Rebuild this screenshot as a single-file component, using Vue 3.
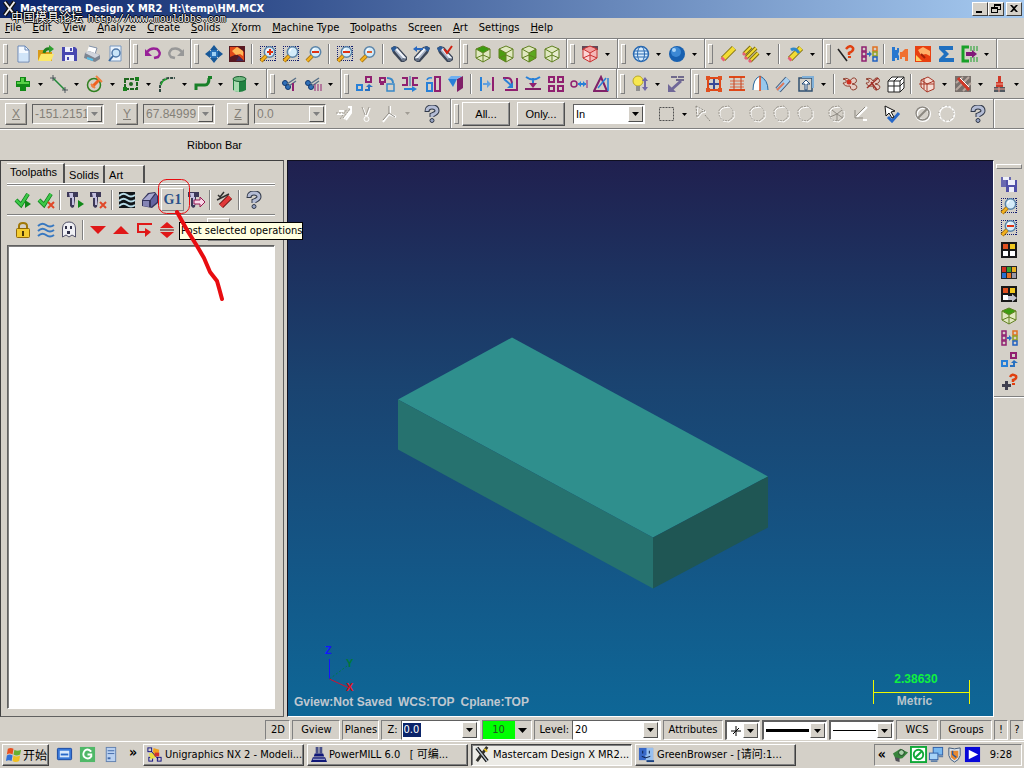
<template>
  <div class="app">
    <header class="titlebar">
      <svg class="title-icon" viewBox="0 0 18 18" v-html="icons.xlogo"></svg>
      <h1 class="title">Mastercam Design X MR2&nbsp; H:\temp\HM.MCX</h1>
      <div class="window-buttons">
        <button class="win-btn" aria-label="Minimize">
          <svg viewBox="0 0 12 10"><path d="M2 7h6v2H2z" /></svg>
        </button>
        <button class="win-btn" aria-label="Restore">
          <svg viewBox="0 0 12 10"><path d="M4 0h7v6H8v3H1V3h3zM5 2v1h3v2h2V2zM2 5v3h5V5z" fill-rule="evenodd" /></svg>
        </button>
        <button class="win-btn close" aria-label="Close">
          <svg viewBox="0 0 12 10"><path d="M2 1h2l2 2 2-2h2L7 4.500l3 3.500H8L6 6 4 8H2l3-3.500z" /></svg>
        </button>
      </div>
      <div class="watermark">中国模具论坛 <span>http://www.mouldbbs.com</span></div>
    </header>

    <nav class="menubar">
      <button v-for="m in menus" :key="m.join('')" class="menu-item">{{ m[0] }}<u>{{ m[1] }}</u>{{ m[2] }}</button>
    </nav>

    <div v-for="(row, r) in toolbars" :key="r" class="toolbar-row">
      <div v-for="(group, g) in row" :key="g" class="tool-group">
        <template v-for="(item, i) in group" :key="i">
          <span v-if="item === '|'" class="sep"></span>
          <button v-else-if="item === 'v'" class="drop" aria-label="More options"><svg viewBox="0 0 5 3"><path d="M0 0h5L2.500 3z" /></svg></button>
          <button v-else class="tool" :aria-label="item"><svg viewBox="0 0 18 18" v-html="icons[item]"></svg></button>
        </template>
      </div>
    </div>

    <div class="toolbar-row coord-row">
      <div class="tool-group coords">
        <div v-for="c in coords" :key="c.axis" class="coord">
          <button class="axis-btn" disabled><u>{{ c.axis }}</u></button>
          <div class="combo disabled">
            <input v-model="c.value" :aria-label="c.axis + ' coordinate'" disabled />
            <button class="combo-btn" disabled :aria-label="c.axis + ' history'"><svg viewBox="0 0 7 4"><path d="M0 0h7L3.500 4z" /></svg></button>
          </div>
        </div>
        <button v-for="n in ['dPoints', 'dExclaim', 'dPen']" :key="n" class="tool" disabled :aria-label="n"><svg viewBox="0 0 18 18" v-html="icons[n]"></svg></button>
        <button class="drop faded" disabled aria-label="More options"><svg viewBox="0 0 5 3"><path d="M0 0h5L2.500 3z" /></svg></button>
        <button class="tool help" aria-label="Help"><svg viewBox="0 0 18 18" v-html="icons.help"></svg></button>
      </div>
      <div class="tool-group selection">
        <button class="push-btn">All...</button>
        <button class="push-btn">Only...</button>
        <div class="combo in-combo">
          <select aria-label="Selection mode"><option>In</option><option>Out</option></select>
          <span class="combo-btn"><svg viewBox="0 0 7 4"><path d="M0 0h7L3.500 4z" /></svg></span>
        </div>
        <template v-for="(item, i) in selectTools" :key="i">
          <span v-if="item === '_'" class="space"></span>
          <button v-else-if="item === 'v'" class="drop" aria-label="More options"><svg viewBox="0 0 5 3"><path d="M0 0h5L2.500 3z" /></svg></button>
          <button v-else class="tool" :aria-label="item"><svg viewBox="0 0 18 18" v-html="icons[item]"></svg></button>
        </template>
      </div>
    </div>

    <div class="ribbon">Ribbon Bar</div>

    <main class="workspace">
      <aside class="manager">
        <div class="tabs" role="tablist">
          <button v-for="t in tabs" :key="t" class="tab" role="tab" :class="{ active: t === activeTab }" :aria-selected="t === activeTab" @click="activeTab = t">{{ t }}</button>
        </div>
        <div v-for="(row, r) in managerTools" :key="r" class="manager-tools">
          <template v-for="(item, i) in row" :key="i">
            <span v-if="item === '|'" class="sep narrow"></span>
            <button v-else class="tool" :class="{ raised: item === 'g1' || item === 'ghostDim' }" :aria-label="item">
              <span v-if="item === 'g1'" class="g1">G1</span>
              <svg v-else viewBox="0 0 18 18" v-html="icons[item]"></svg>
            </button>
          </template>
        </div>
        <div class="tree"></div>
        <div class="tooltip" role="tooltip">Post selected operations</div>
        <svg class="annotation" viewBox="0 0 80 130">
          <rect x="5.500" y="5.500" width="31" height="34" rx="8" stroke-width="1" />
          <path d="M24 38L34 56L44 72L51 84L57 98L64 107L66 114L69 125" stroke-width="4" />
        </svg>
      </aside>

      <section class="viewport">
        <svg class="model" viewBox="0 0 705 554">
          <polygon points="224,176 480,315 365,376 110,238" fill="#2f8f8d" />
          <polygon points="110,238 365,376 365,427 110,288" fill="#26726f" />
          <polygon points="365,376 480,315 480,366 365,427" fill="#1f5654" />
        </svg>
        <svg class="gnomon" viewBox="0 0 40 52">
          <path d="M9.500 16v20" stroke="#1414ff" />
          <path d="M9.500 36L29 45" stroke="#d01030" />
          <path d="M9.500 36L27 23" stroke="#007848" stroke-dasharray="2 2" />
          <text x="5" y="11" fill="#1414ff">Z</text>
          <text x="26" y="24" fill="#007838">Y</text>
          <text x="26" y="48" fill="#e01020">X</text>
        </svg>
        <div class="view-labels">
          <span>Gview:Not Saved</span><span>WCS:TOP</span><span>Cplane:TOP</span>
        </div>
        <div class="scale">
          <span class="scale-value">2.38630</span>
          <span class="scale-line"></span>
          <span class="scale-unit">Metric</span>
        </div>
      </section>

      <div class="side-tools">
        <button v-for="n in sideTools" :key="n" class="tool" :aria-label="n"><svg viewBox="0 0 18 18" v-html="icons[n]"></svg></button>
      </div>
    </main>

    <div class="statusbar">
      <button class="cell dim">2D</button>
      <button class="cell gview">Gview</button>
      <button class="cell planes">Planes</button>
      <div class="cell field">
        <label for="zdepth">Z:</label>
        <div class="combo zcombo">
          <input id="zdepth" v-model="zDepth" class="selected" />
          <span class="combo-fill"></span>
          <button class="combo-btn" aria-label="Z history"><svg viewBox="0 0 7 4"><path d="M0 0h7L3.500 4z" /></svg></button>
        </div>
      </div>
      <div class="cell color-cell">
        <button class="color">10</button>
        <button class="color-drop" aria-label="Color list"><svg viewBox="0 0 9 5"><path d="M0 0h9L4.500 5z" /></svg></button>
      </div>
      <div class="cell field">
        <label for="level">Level:</label>
        <div class="combo level-combo">
          <input id="level" v-model="level" />
          <button class="combo-btn" aria-label="Level list"><svg viewBox="0 0 7 4"><path d="M0 0h7L3.500 4z" /></svg></button>
        </div>
      </div>
      <button class="cell attributes">Attributes</button>
      <div v-for="s in styles" :key="s.name" class="combo style-combo" :class="s.name">
        <button class="style-value" :aria-label="s.label"><svg v-if="s.name === 'point'" viewBox="0 0 10 10"><path d="M5 0v10M0 5h10M2 8l6-6" /></svg><span v-else class="stroke"></span></button>
        <span class="combo-btn"><svg viewBox="0 0 7 4"><path d="M0 0h7L3.500 4z" /></svg></span>
      </div>
      <button class="cell wcs">WCS</button>
      <button class="cell groups">Groups</button>
      <button class="cell tiny">!</button>
      <button class="cell tiny">?</button>
    </div>

    <footer class="taskbar">
      <button class="start"><svg viewBox="0 0 18 18" v-html="icons.windows"></svg>开始</button>
      <div class="quick">
        <button v-for="n in ['desktop', 'greenG', 'server']" :key="n" :aria-label="n"><svg viewBox="0 0 18 18" v-html="icons[n]"></svg></button>
        <span class="chevrons">»</span>
      </div>
      <button v-for="t in tasks" :key="t.icon" class="task" :class="{ active: t.active }">
        <svg viewBox="0 0 18 18" v-html="icons[t.icon]"></svg><span>{{ t.text }}</span>
      </button>
      <div class="tray">
        <span class="chevrons">«</span>
        <svg v-for="n in ['trayCard', 'trayGreen', 'trayNet', 'trayShield', 'trayPlay']" :key="n" viewBox="0 0 18 18" v-html="icons[n]"></svg>
        <time>9:28</time>
      </div>
    </footer>
  </div>
</template>

<script setup>
import { ref, reactive } from 'vue';

const menus = [
  ['', 'F', 'ile'], ['', 'E', 'dit'], ['', 'V', 'iew'], ['', 'A', 'nalyze'], ['', 'C', 'reate'],
  ['', 'S', 'olids'], ['', 'X', 'form'], ['', 'M', 'achine Type'], ['', 'T', 'oolpaths'],
  ['Sc', 'r', 'een'], ['', 'A', 'rt'], ['Sett', 'i', 'ngs'], ['', 'H', 'elp']
];

const toolbars = [
  [
    ['newFile', 'open', 'save', 'print', 'preview'],
    ['undo', 'redo'],
    ['pan', 'repaint', '|', 'zoomWin', 'zoomTarget', 'zoomOut', '|', 'unzoomWin', 'unzoom', '|', 'tube', 'tubeArrow', 'tubeCheck'],
    ['cubeTop', 'cubeFront', 'cubeSide', 'cubeIso'],
    ['cubeRed', 'v'],
    ['globeWire', 'v', 'globe', 'v'],
    ['eraser', 'eraserMulti', 'v', '|', 'undelete', 'v'],
    ['lineQuery', 'attrs', '|', 'machine', 'flame', 'sigma', 'run', 'v']
  ],
  [
    ['plus', 'v', 'line', 'v', 'circle', 'v', 'rectangle', 'v', 'fillet', 'v', 'spline', 'v', 'cylinder', 'v'],
    ['trim', 'trimMany', 'v'],
    ['translate', 'rotate', 'mirror', 'scale', 'offset', '|', 'stretch', 'roll', 'project', 'array', 'dynamic', 'drag'],
    ['bulb', 'v', 'dimension'],
    ['netSurf', 'ruled', 'revolve', 'sweep', 'extrude', 'v', '|', 'flower', 'flowerTrim', 'box', '|', 'surfFillet', 'v', 'surfTrim', 'v', 'lathe', 'v']
  ]
];

const selectTools = [
  'marquee', 'v', 'dCursor', 'dHex', '_', 'dHex', 'dHex', 'dHex', '_', 'dCube', 'dArrow', '_',
  'pointer', '_', 'dCancel', 'dCircle', '_', 'help'
];

const coords = reactive([
  { axis: 'X', value: '-151.2151' },
  { axis: 'Y', value: '67.84999' },
  { axis: 'Z', value: '0.0' }
]);

const tabs = ['Toolpaths', 'Solids', 'Art'];
const activeTab = ref('Toolpaths');

const managerTools = [
  ['checkAll', 'checkNone', '|', 'regen', 'regenX', '|', 'wavesDark', 'solidBox', 'g1', 'feed', '|', 'knife', '|', 'help'],
  ['lock', 'waves', 'ghost', '|', 'down', 'up', 'insert', 'expand', '|', 'expandDim', 'ghostDim']
];

const sideTools = ['saveSome', 'zoomTarget', 'zoomOutWin', 'levels', 'palette', 'levelsMove', 'cubeTop', 'attrs', 'translate', 'plusQuery'];

const zDepth = ref('0.0');
const level = ref('20');

const styles = [
  { name: 'point', label: 'Point style' },
  { name: 'thick', label: 'Line width' },
  { name: 'thin', label: 'Line style' }
];

const tasks = [
  { icon: 'nx', text: 'Unigraphics NX 2 - Modeli...' },
  { icon: 'mill', text: 'PowerMILL 6.0   [ 可编...' },
  { icon: 'xdark', text: 'Mastercam Design X MR2...', active: true },
  { icon: 'browser', text: 'GreenBrowser - [请问:1...' }
];

// Small builders for glyphs that share a base shape
const stroke = (d, color, width = 2) => `<path d="${d}" fill="none" stroke="${color}" stroke-width="${width}"/>`;
const fill = (d, color) => `<path d="${d}" fill="${color}"/>`;
const box = (x, y, w, h, color, width = 2) => `<rect x="${x}" y="${y}" width="${w}" height="${h}" fill="none" stroke="${color}" stroke-width="${width}"/>`;

const lens = '<circle cx="10.500" cy="7" r="5.200" fill="#d4ecfa" stroke="#5b84a8" stroke-width="1.500"/>' + fill('M7 6q1-3 4-3-2 1-3 4z', '#fff') + stroke('M7 11L2 16', '#9a6a10', 4) + stroke('M7 11L2 16', '#f0b020', 2.5);
const dots = '<path d="M1 1.500h16M1 15.500h16M1.500 1v15M16.500 1v15" fill="none" stroke="#101c70" stroke-dasharray="1 1"/>';
const minus = fill('M7 6h7v2H7z', '#e03010');

const cube = (line, top, left, right) =>
  fill('M9 1L16 4L9 8L2 4z', top) + fill('M2 4L9 8V17L2 13z', left) + fill('M9 8L16 4V13L9 17z', right) +
  stroke('M9 1L16 4V13L9 17L2 13V4zM2 4L9 8L16 4M9 8V17M2 13L9 10L16 13', line, 1);

const metalTube = fill('M1 3l3-2 4 1 9 10v3l-3 2h-3L3 8z', '#3c4658') + fill('M3 4l3-2 10 11-3 3z', '#a4b0c4') + fill('M5 4l2-1 9 10-2 1z', '#f0f4fa') + fill('M1 3l4-2 2 2-4 4z', '#2c5c98') + '<ellipse cx="13.500" cy="14.500" rx="2" ry="1.500" fill="#687488"/>';
const yellowEraser = stroke('M4 14L15 3', '#80700c', 6) + stroke('M4 14L15 3', '#f2dc34', 4) + stroke('M3 15L5 13', '#e86078', 4);
const scissors = '<circle cx="4" cy="8" r="2.500" fill="#3070b8" stroke="#103870"/><circle cx="7" cy="12" r="2.500" fill="#3070b8" stroke="#103870"/>' + stroke('M6 9L15 3M8 11L15 6', '#587088', 1.5);
const check = stroke('M2 9L7 14L14 3', '#0a7a18', 4) + stroke('M2 9L7 14L14 3', '#3cc848', 2.5);
const redX = stroke('M11 11L17 17M17 11L11 17', '#e04828', 2);
const endMill = fill('M1 1h11v5H9v3l-1 7-2 1-2-2V6H1z', '#3c3858') + fill('M3 2h4v4h1v8H6V7H4z', '#c4c0e0');
const etchedHex = '<path d="M5 3L12 2L16 6V13L11 17L5 16L2 11V6z" fill="none" stroke="#fff" stroke-width="1"/><path d="M4 2L11 1L15 5V12L10 16L4 15L1 10V5z" fill="none" stroke="#9c9890" stroke-width="1" stroke-dasharray="2 1"/>';
const waveLines = (c) => stroke('M1 5Q5 1 9 4T17 4M1 10Q5 6 9 9T17 9M1 15Q5 11 9 14T17 14', c, 2);
const palette = (d) => d.map(([x, y, c]) => `<rect x="${x}" y="${y}" width="4" height="5" fill="${c}"/>`).join('');
const flowerShape = '<path d="M2 4Q7 2 9 6Q12 1 15 4Q17 8 11 9Q18 10 15 14Q10 17 9 11Q4 12 2 8Q6 8 5 5z" fill="#e4ccc4" stroke="#904030"/>';

const icons = {
  xlogo: stroke('M3 1L15 17M14 1L3 16', '#111', 5) + stroke('M3 1L15 17M14 1L3 16', '#eee', 2),
  xdark: stroke('M3 2L14 16', '#111', 4) + stroke('M14 1L3 16', '#30302c', 3) + stroke('M3 2L14 16', '#b8c4d0', 1.5) + stroke('M11 3l3 3', '#e8c020', 2),
  newFile: '<path d="M4 1h7l4 4v12H4z" fill="#f4f9ff" stroke="#6888b8"/>' + fill('M5 8h9v8H5z', '#d0e4f8') + stroke('M11 1v4h4', '#6888b8', 1),
  open: fill('M1 5h6l2 2h6v9H1z', '#d89a18') + fill('M4 9h13l-3 7H1z', '#fce868') + stroke('M7 8Q8 3 13 4', '#208020', 3) + fill('M12 0l5 4-5 4z', '#30a030'),
  save: fill('M2 2h13l2 2v12H2z', '#4848b0') + fill('M5 2h8v5H5zM5 10h9v6H5z', '#eef0fa') + fill('M10 3h2v3h-2zM7 12h2v3H7z', '#4848b0'),
  print: fill('M6 1l8 2-2 6-8-2z', '#fff') + stroke('M6 1l8 2-2 6', '#8090a8', 1) + fill('M2 8l4-2 11 4v4l-5 3L1 13z', '#7c8490') + fill('M2 8l4-2 11 4-5 3z', '#d0d4dc') + stroke('M4 13l6 2', '#58c0e8', 2),
  preview: '<path d="M4 1h11v15H4z" fill="#eaf3fc" stroke="#7898c0"/><circle cx="10" cy="8" r="4" fill="#c8e4f8" stroke="#5078a8" stroke-width="1.500"/>' + stroke('M7 11L3 16', '#3868a0', 2),
  undo: stroke('M3 7Q7 2 13 4Q18 8 14 12L10 13', '#982098', 2.5) + fill('M1 4v7h7z', '#982098'),
  redo: stroke('M15 7Q11 2 5 4Q0 8 4 12L8 13', '#989898', 2.5) + fill('M17 4v7h-7z', '#989898'),
  pan: fill('M9 0l4 5H5zM9 18l4-5H5zM0 9l5-4v8zM18 9l-5-4v8z', '#185898') + fill('M6 5h6v1h1v6h-1v1H6v-1H5V6h1z', '#2870b8') + fill('M7 7h4v4H7z', '#a0d0f4'),
  repaint: fill('M1 1h16v16H1z', '#581820') + fill('M2 2h8l6 5v9L9 9 2 12z', '#e04818') + fill('M4 6l5-4 6 4v5l-3-2-4 1z', '#ffb858') + fill('M11 11l5 5H8z', '#402858'),
  zoomWin: dots + lens + fill('M10 4h2v2h2v2h-2v2h-2V8H8V6h2z', '#e03010'),
  zoomTarget: dots + lens,
  zoomOut: lens + minus,
  unzoomWin: dots + lens + minus,
  zoomOutWin: dots + lens + minus,
  unzoom: lens + fill('M8 6h5v2H8z', '#e06030'),
  tube: metalTube,
  tubeArrow: '<g transform="matrix(-1 0 0 1 18 0)">' + metalTube + '</g>' + stroke('M2 4h8', '#2868c0', 2) + fill('M0 4l4-3v6z', '#2868c0'),
  tubeCheck: metalTube + stroke('M8 4l3 4 5-7', '#d02010', 2),
  cubeTop: cube('#608020', '#3c9c10', '#e0e8c0', '#e0e8c0'),
  cubeFront: cube('#608020', '#e0e8c0', '#4c9c10', '#e0e8c0'),
  cubeSide: cube('#608020', '#e0e8c0', '#e0e8c0', '#5ca820'),
  cubeIso: cube('#608020', '#e0e8c0', '#e0e8c0', '#e8ecd0'),
  cubeRed: fill('M1 1h16v4H1z', '#604858') + cube('#c83030', '#f4a0a0', '#fcd4d4', '#f4b8b8'),
  globeWire: '<circle cx="9" cy="9" r="7.500" fill="#d8ecfc" stroke="#2868b0" stroke-width="1.500"/><ellipse cx="9" cy="9" rx="3.500" ry="7.500" fill="none" stroke="#2868b0"/>' + stroke('M2 6h14M1 9h16M2 12h14', '#2868b0', 1),
  globe: '<circle cx="9" cy="9" r="8" fill="#1860b0"/><circle cx="8" cy="7" r="5" fill="#3c88d4"/><circle cx="6" cy="5" r="2" fill="#a8d4f8"/>',
  eraser: yellowEraser,
  eraserMulti: stroke('M2 9L9 2', '#80700c', 4) + stroke('M2 9L9 2', '#f2dc34', 2) + stroke('M8 16L16 8', '#80700c', 4) + stroke('M8 16L16 8', '#f2dc34', 2) + stroke('M4 13L14 3', '#80700c', 4) + stroke('M4 13L14 3', '#f2dc34', 2) + stroke('M1 10l2-2M3 14l2-2M7 17l2-2', '#e86078', 3),
  undelete: yellowEraser + stroke('M5 5q4-3 8 3', '#3088c8', 3),
  lineQuery: stroke('M1 4L10 16', '#202020', 1.5) + stroke('M9 4Q13 -1 16 3Q17 6 12 8V10', '#e04010', 2.5) + fill('M11 11h3v2h-3z', '#e04010'),
  attrs: box(2, 2, 4, 4, '#902070', 1.5) + box(2, 7, 4, 4, '#902070', 1.5) + box(2, 12, 4, 4, '#902070', 1.5) + box(13, 2, 4, 4, '#e07020', 1.5) + box(13, 7, 4, 4, '#90a020', 1.5) + box(13, 12, 4, 4, '#2060c0', 1.5) + fill('M7 8h2V6l3 3-3 3v-2H7z', '#3070c0'),
  machine: fill('M1 2h3v3h2V3h2v4l-1 2 1 2v4H6v-2H4v3H1z', '#2878d0') + fill('M9 7h2l3-3h3v12h-3v-4h-3v2H9z', '#f07030'),
  flame: fill('M1 1h16v16H1z', '#e84010') + fill('M4 5l5-3 7 4v5l-4-2-5 1z', '#ffb068') + fill('M2 10l6 6H2z', '#ffd060') + stroke('M7 9l4 4', '#a02008', 2),
  sigma: fill('M2 1h14v4H8l4 4-4 4h9v4H2v-3l5-5-5-5z', '#2070c0'),
  run: stroke('M9 2H3V16H9', '#18a028', 3) + stroke('M11 1v5M14 1v5M17 1v5M11 12v5M14 12v5M17 12v5', '#18a028', 1) + fill('M6 7h6V5l5 4-5 4v-2H6z', '#801878'),
  plus: fill('M6 2h6v4h4v6h-4v4H6v-4H2V6h4z', '#128a18') + fill('M7 3h3v4h5v2H3V7h4z', '#58d048'),
  line: stroke('M3 3L15 15', '#208838', 1.5) + stroke('M3 0v6M0 3h6M15 12v6M12 15h6', '#505860', 1),
  circle: '<circle cx="8" cy="10" r="6.500" fill="none" stroke="#308020" stroke-width="1.500"/>' + stroke('M6 12L14 4', '#f06020', 3) + stroke('M10 1l6 6M5 9l4 4', '#f08040', 2),
  rectangle: '<rect x="3" y="4" width="12" height="10" fill="none" stroke="#206820" stroke-width="2" stroke-dasharray="4 1"/><circle cx="9" cy="9" r="2" fill="#206820"/>' + fill('M1 12h4v4H1zM13 2h4v4h-4z', '#18801c'),
  fillet: '<path d="M2 17V11Q3 4 11 3H17" fill="none" stroke="#304840" stroke-width="2" stroke-dasharray="3 1"/>' + stroke('M3 10Q4 5 9 4', '#20a030', 1.5),
  spline: stroke('M2 15V10H11Q15 10 15 3', '#188028', 3) + fill('M14 1h4v3h-4z', '#188028'),
  cylinder: fill('M3 4v11q6 4 13 0V4z', '#208040') + fill('M4 5v11q3 1 5 1V5z', '#a8dcb0') + '<ellipse cx="9.500" cy="4" rx="6.500" ry="2.500" fill="#70b880" stroke="#186030"/>',
  trim: scissors + stroke('M12 8v8', '#902070', 2),
  trimMany: scissors + stroke('M11 9v7M14 9v7M17 9v7', '#902070', 1),
  translate: box(2, 10, 5, 5, '#2880d8') + box(11, 2, 5, 5, '#902070') + stroke('M10 15h4v-3', '#2870c0', 2) + fill('M11 12l3-3 4 3z', '#2870c0'),
  rotate: stroke('M2 3h5v4H2zM2 9h4', '#902070', 2) + box(9, 9, 7, 7, '#3888c8', 1.5) + stroke('M9 3Q15 3 15 8', '#3888c8', 2),
  mirror: stroke('M1 3h5v7H1M17 3h-5v7h5', '#902070', 2) + stroke('M9 1v10', '#2868a8', 1) + stroke('M3 14h9', '#2880d8', 2) + fill('M11 11l5 3-5 3z', '#2880d8'),
  scale: box(3, 8, 5, 8, '#2880d8') + box(11, 2, 5, 14, '#902070') + stroke('M3 5q1-3 5-2', '#2880d8', 1.5),
  offset: fill('M1 4h9l-4 8z', '#2880d8') + fill('M10 4l6-3v12l-6 4z', '#802068') + fill('M4 1h11l-5 3H1z', '#70b0f0'),
  stretch: stroke('M3 2v14', '#2880d8') + stroke('M15 2v14', '#902070') + fill('M5 8h4V5l4 4-4 4v-3H5z', '#60a0e0'),
  roll: stroke('M2 3h5q4 0 4 7M4 15h12V3', '#902070', 2) + stroke('M3 4l8 7', '#2880d8', 2) + fill('M12 7v6H6z', '#2880d8'),
  project: stroke('M1 14h16', '#802068', 2) + stroke('M2 2q7 5 14 0M9 3v7', '#2880d8', 2) + fill('M5 8h8l-4 5z', '#902070'),
  array: box(2, 2, 5, 5, '#902070') + box(11, 2, 5, 5, '#902070') + box(2, 11, 5, 5, '#902070') + box(11, 11, 5, 5, '#902070'),
  dynamic: '<circle cx="4" cy="9" r="3" fill="none" stroke="#902070" stroke-width="1.500"/>' + stroke('M8 9h8', '#2880d8', 2) + fill('M11 6v6L8 9zM13 6v6l3-3z', '#2880d8') + stroke('M17 5v8', '#902070', 1),
  drag: stroke('M1 16L8 2L14 16z', '#802068', 2) + stroke('M5 13L13 3M15 3v13', '#2880d8', 1.5),
  bulb: '<circle cx="7" cy="6" r="5" fill="#f8e850" stroke="#b8a828"/>' + fill('M5 11h4v5H5z', '#909090') + fill('M14 2l3 4h-2v6h2l-3 4-3-4h2V6h-2z', '#7068a8'),
  dimension: stroke('M4 2h6M11 2h6M9 5h8', '#504878', 1.5) + stroke('M14 6L4 15', '#706898', 3) + fill('M1 9v8h8z', '#706898'),
  netSurf: box(3, 3, 12, 12, '#e04818', 2) + stroke('M9 4v10M4 9h10', '#384898', 2) + fill('M1 1h4v4H1zM13 1h4v4h-4zM1 13h4v4H1zM13 13h4v4h-4z', '#e05020'),
  ruled: stroke('M1 2h16M1 15h16', '#e04818', 2) + stroke('M2 6h14M2 9h14M2 12h14', '#e06840', 1) + stroke('M6 2v13M13 2v13', '#c04020', 1),
  revolve: fill('M2 15Q2 4 9 1V15z', '#fff') + fill('M9 1Q17 5 17 15H9z', '#98c8ec') + stroke('M9 1Q17 5 17 15M2 15Q2 4 9 1', '#2868a0', 1) + stroke('M9 1v15', '#e04818', 1.5),
  sweep: stroke('M4 15L14 4', '#405878', 7) + stroke('M4 15L14 4', '#a8d0f0', 5) + stroke('M3 15l7-7', '#e07858', 2),
  extrude: box(2, 3, 13, 13, '#305070', 1.5) + fill('M5 1h12v12h-2V3H5z', '#80b0d8') + fill('M8 15V9H5l4-4 4 4h-3v6z', '#fff') + stroke('M8 15V9H5l4-4 4 4h-3v6z', '#204878', 1),
  flower: flowerShape + '<circle cx="8" cy="7" r="2.500" fill="#d03020"/>',
  flowerTrim: flowerShape + stroke('M3 13L14 3M7 7l6 8', '#a03028', 1.5),
  box: fill('M5 2h12v11l-4 4H1V6z', '#fff') + stroke('M1 6h12v11H1zM1 6l4-4h12l-4 4M17 2v11l-4 4M7 6v11M1 11h12l4-4M7 6l4-4', '#202020', 1),
  surfFillet: fill('M3 5l7-3 6 4v8l-7 3-6-5z', '#f4dcd4') + stroke('M3 5l7-3 6 4v8l-7 3-6-5zM3 5l6 4 7-3M9 9v8M1 9h15M6 3v11', '#a83828', 1),
  surfTrim: fill('M1 1h16v16H1z', '#78706c') + stroke('M2 15L15 2M2 8l7-6M9 16l8-8', '#b8a8a0', 2) + stroke('M4 3l11 12', '#d03828', 3) + stroke('M6 3l9 9', '#fff', 1),
  lathe: fill('M8 1h3v6H8zM6 7h7v5H6z', '#d03828') + fill('M4 12h11v5H4z', '#505860') + stroke('M6 9h7M4 14h11M9 12v5', '#f0a090', 1),
  help: stroke('M4 7Q4 2 9 2Q14 2 14 6Q14 8 9 10V12', '#303848', 5) + stroke('M4 6Q4 2 9 2Q14 2 14 6Q14 8 9 10V12', '#b4bcd4', 3) + '<circle cx="9" cy="15.500" r="2" fill="#98a4c4" stroke="#303848"/>',
  dPoints: '<path d="M2 9h7M4 6h5M9 14L16 5M13 2h3v6l-5 7" fill="none" stroke="#fff" stroke-width="2"/><path d="M1 8h7M8 13L15 4M5 14L12 4" fill="none" stroke="#a09c94" stroke-dasharray="2 1"/>',
  dExclaim: stroke('M5 3l3 8M12 3L9 11', '#fff', 1.5) + stroke('M4 2l3 8M11 2L8 10', '#a09c94', 1) + '<circle cx="8.500" cy="14" r="2.500" fill="none" stroke="#fff"/>',
  dPen: stroke('M9 1v7L2 17M8 9l7 3', '#fff', 2) + stroke('M8 1v7L2 15M8 8l6 4', '#8c8880', 1),
  marquee: '<rect x="2.500" y="2.500" width="14" height="13" fill="none" stroke="#505050" stroke-dasharray="2 1"/>',
  dCursor: '<path d="M3 2L12 7L8 8L4 13z" fill="none" stroke="#fff"/><path d="M2 1L11 6L7 7L3 12zM11 10l5 6" fill="none" stroke="#8c8880" stroke-dasharray="2 1"/>',
  dHex: etchedHex,
  dCube: etchedHex + stroke('M4 5l5 4 5-4M9 9v7M2 12l7-3 6 4', '#908c84', 1),
  dArrow: stroke('M15 2L5 12M15 15h-4', '#fff', 2) + stroke('M13 2L4 11M3 5v8h8', '#8c8880', 1),
  dCancel: '<circle cx="9" cy="9" r="6.500" fill="none" stroke="#fff" stroke-width="3"/><circle cx="8.500" cy="8.500" r="6.500" fill="none" stroke="#8c8880" stroke-width="1.500"/>' + stroke('M4 13L13 4', '#8c8880', 2),
  dCircle: '<circle cx="9" cy="9" r="7.500" fill="none" stroke="#fff" stroke-width="1.500"/><circle cx="8.500" cy="8.500" r="7.500" fill="none" stroke="#908c84" stroke-dasharray="1 3"/>',
  pointer: stroke('M5 12l4 4 7-8', '#2868c8', 3) + '<path d="M2 1L12 6L8 7L11 12L9 13L6 8L3 11z" fill="#fff" stroke="#111"/>',
  checkAll: check + fill('M11 9l6 4-6 4z', '#108818'),
  checkNone: check + redX,
  regen: endMill + fill('M12 9l6 4-6 4z', '#108818'),
  regenX: endMill + redX,
  wavesDark: fill('M1 1h16v16H1z', '#101418') + waveLines('#b8dce8'),
  waves: waveLines('#3878c0'),
  solidBox: fill('M1 9l6-7 7-1 3 4v7l-6 5-10-2z', '#34345c') + fill('M2 9l6-6 6-1-5 7z', '#a8a8d0') + fill('M2 10h6v6l-6-1z', '#8484b4') + fill('M10 9l5-6 1 2v6l-6 5z', '#6464a0'),
  feed: endMill + '<path d="M7 9h6V6l5 5-5 5v-3H7z" fill="#f8d8e8" stroke="#981850"/>',
  knife: stroke('M5 15L14 6', '#601010', 6) + stroke('M5 15L14 6', '#e03838', 4) + stroke('M2 4l3 3M8 1l-4 5M1 9l12-6', '#303030', 1.5),
  lock: '<path d="M5 8V5Q5 2 9 2Q13 2 13 5V8" fill="none" stroke="#a07808" stroke-width="2"/><rect x="2.500" y="7.500" width="13" height="9" rx="1" fill="#f4cc30" stroke="#906808"/>' + fill('M8 10h2v5H8z', '#483808'),
  ghost: '<path d="M2.500 16V7Q3 1 9 1Q15 1 15.500 7V16L12 14L9 16L6 14z" fill="#f0f0f4" stroke="#505068"/>' + fill('M5 5h2v3H5zM10 5h2v3h-2zM7 10h3v3H7z', '#303048'),
  ghostDim: fill('M4 3h8v2H4z', '#b0aca4'),
  expandDim: '',
  down: fill('M1 5h16l-8 8z', '#e01818'),
  up: fill('M1 13h16L9 5z', '#e01818'),
  insert: stroke('M17 3H3V11H11', '#e01818', 2) + fill('M10 7l6 4-6 5z', '#e01818'),
  expand: fill('M2 7h14L9 1zM2 11h14l-7 6z', '#e01818') + stroke('M2 9h14', '#501010', 1),
  saveSome: fill('M1 2h10v10H1z', '#6868b0') + fill('M6 5h11v12H6z', '#5050a8') + fill('M8 5h7v5H8zM3 2h6v3H3zM9 12h5v5H9z', '#eef0fa'),
  levels: fill('M1 1h16v16H1z', '#181818') + fill('M3 3h5v5H3z', '#e05020') + fill('M10 3h5v5h-5z', '#f0c820') + fill('M3 10h5v5H3zM10 10h5v5h-5z', '#fff'),
  levelsMove: fill('M1 1h16v16H1z', '#181818') + fill('M3 3h5v5H3z', '#e05020') + fill('M10 3h5v5h-5z', '#f0c820') + fill('M3 10h5v5H3z', '#fff') + fill('M8 11h4V9l5 4-5 4v-2H8z', '#c0c0cc'),
  palette: fill('M1 3h16v13H1z', '#282828') + palette([[2, 4, '#d03020'], [7, 4, '#38a030'], [12, 4, '#e8b020'], [2, 10, '#2870d0'], [7, 10, '#e87020'], [12, 10, '#9898a8']]),
  plusQuery: fill('M5 8h3v3h3v3H8v3H5v-3H2v-3h3z', '#404050') + stroke('M10 4Q12 0 16 3Q17 6 13 7V9', '#e04010', 2.5) + fill('M12 10h3v2h-3z', '#e04010'),
  windows: fill('M3 3q3-2 6 0L8 9Q5 7 2 9z', '#e85020') + fill('M10 4q3 2 7 0l-1 5q-4 2-7 0z', '#68b030') + fill('M2 10q3-2 6 0l-1 6q-3-2-6 0z', '#3070d8') + fill('M9 10q3 2 7 0l-1 6q-4 2-7 0z', '#f0c020'),
  desktop: '<rect x="1.500" y="2.500" width="15" height="12" rx="1" fill="#3878d8" stroke="#1848a0"/>' + fill('M4 5h10v7H4z', '#d8e8fc') + fill('M5 8h8v2H5z', '#2868c8'),
  greenG: '<rect x="1" y="1" width="16" height="16" fill="#50b868"/><path d="M13 6Q9 2 6 5Q3 9 6 12Q10 15 13 11V9H9" fill="none" stroke="#fff" stroke-width="2"/>',
  server: '<rect x="4.500" y="1.500" width="10" height="15" fill="#b8d0f0" stroke="#6080b0"/>' + stroke('M6 5h7M6 8h7', '#4068a8', 1) + fill('M6 12h3v2H6z', '#4068a8'),
  nx: box(2, 2, 4, 4, '#101080', 1) + box(12, 12, 4, 4, '#101080', 1) + box(3, 12, 4, 4, '#101080', 1) + fill('M8 2l6 2-1 6-6-2z', '#f0a020') + fill('M3 8l6-1 2 5-6 2z', '#e8e040') + stroke('M6 6l7 8', '#101080', 1) + fill('M9 7h5v4H9z', '#d03030'),
  mill: fill('M6 1h3v7H6zM10 1h3v7h-3z', '#485088') + fill('M5 8h9l1 3H4zM3 12h13l2 5H1z', '#101878') + stroke('M3 14h13', '#d0d8f0', 1),
  browser: fill('M1 2h15v13H1z', '#3868c8') + fill('M9 2h7v13H8q1-4-1-5h2z', '#98c0f0') + stroke('M5 5v3M12 5v3M4 11q4 3 9 0', '#081840', 1) + fill('M9 15h8v2H9z', '#184080'),
  trayCard: fill('M1 8l8-5 8 4-6 6-7 1z', '#38843c') + '<circle cx="10" cy="7" r="3" fill="#a8d0a8" stroke="#184020"/>' + fill('M3 12l5 1v4l-4-1z', '#505058'),
  trayGreen: '<rect x="1" y="1" width="16" height="16" fill="#fff" stroke="#10a838" stroke-width="2"/><circle cx="9" cy="9" r="5" fill="none" stroke="#10a838" stroke-width="2"/>' + stroke('M5 13L13 5', '#10a838', 2),
  trayNet: '<rect x="5.500" y="1.500" width="10" height="8" fill="#78b8f0" stroke="#3060a8"/><rect x="1.500" y="7.500" width="9" height="7" fill="#a8d4f8" stroke="#3060a8"/>' + stroke('M3 16h7M11 11h5', '#6080a8', 2),
  trayShield: '<path d="M3 2Q9 4 15 2V10Q14 15 9 17Q4 15 3 10z" fill="#d8e4f0" stroke="#405878"/>' + fill('M5 5h8v7l-4 3-4-3z', '#e88830') + stroke('M7 5v4l4 3', '#2858a0', 1.5),
  trayPlay: fill('M1 1h16v16H1z', '#0808d8') + fill('M5 4l10 5-10 5z', '#fff')
};
</script>

<style>
body {
  background: #d4d0c8;
}
</style>

<style scoped>
.app {
  display: flex;
  flex-direction: column;
  min-height: 100vh;
  overflow: hidden;
  background: #d4d0c8;
  color: #000;
  font-family: "DejaVu Sans Condensed", "Liberation Sans", "Noto Sans CJK SC", sans-serif;
  font-size: 11px;
  line-height: 14px;
}

.app * {
  box-sizing: border-box;
}

button,
input,
select {
  font: inherit;
  color: inherit;
  margin: 0;
  padding: 0;
  border: 0;
  border-radius: 0;
  background: none;
  outline: none;
}

svg {
  display: block;
  flex: none;
}

/* Title bar */
.titlebar {
  position: relative;
  display: flex;
  align-items: center;
  height: 18px;
  padding: 0 2px;
  background: linear-gradient(to right, #0a246a, #a6caf0);
}

.title-icon {
  width: 16px;
  height: 16px;
}

.title {
  flex: 1;
  margin: 0 0 0 2px;
  color: #fff;
  font-family: "DejaVu Sans Condensed", sans-serif;
  font-size: 11px;
  font-weight: 700;
  white-space: nowrap;
}

.window-buttons {
  display: flex;
}

.win-btn {
  width: 16px;
  height: 14px;
  padding: 1px;
  background: #d4d0c8;
  border: 1px solid;
  border-color: #fff #404040 #404040 #fff;
}

.win-btn.close {
  margin-left: 2px;
}

.win-btn svg {
  width: 12px;
  height: 10px;
}

.watermark {
  position: absolute;
  left: 11px;
  top: 9px;
  z-index: 2;
  color: #fff;
  font-family: "Noto Sans CJK SC", sans-serif;
  font-size: 12px;
  line-height: 16px;
  white-space: nowrap;
  text-shadow: 1px 0 #000, -1px 0 #000, 0 1px #000, 0 -1px #000;
}

.watermark span {
  margin-left: 2px;
  font-family: "Liberation Mono", monospace;
  font-size: 10px;
}

/* Menu */
.menubar {
  display: flex;
  gap: 11px;
  height: 20px;
  padding: 0 5px;
  align-items: center;
}

/* Toolbars */
.toolbar-row {
  display: flex;
  height: 30px;
  border-top: 1px solid #808080;
  box-shadow: inset 0 1px #fff;
}

.tool-group {
  position: relative;
  display: flex;
  align-items: center;
  padding: 1px 3px 0 11px;
  border-right: 1px solid #808080;
  box-shadow: 1px 0 #fff;
}

.tool-group::before {
  content: "";
  position: absolute;
  left: 3px;
  top: 5px;
  bottom: 4px;
  width: 3px;
  border: 1px solid;
  border-color: #fff #808080 #808080 #fff;
}

.tool {
  display: flex;
  flex: none;
  align-items: center;
  justify-content: center;
  width: 23px;
  height: 23px;
}

.tool svg {
  width: 18px;
  height: 18px;
}

.drop {
  display: flex;
  align-items: center;
  justify-content: center;
  flex: none;
  width: 13px;
  height: 23px;
}

.drop svg {
  width: 5px;
  height: 3px;
}

.drop.faded svg {
  fill: #a09c94;
}

.sep {
  flex: none;
  width: 2px;
  height: 20px;
  margin: 0 3px;
  border-left: 1px solid #808080;
  border-right: 1px solid #fff;
}

.sep.narrow {
  margin: 0 2px;
}

.coord-row {
  height: 31px;
  border-bottom: 1px solid #808080;
  font-family: "Liberation Sans", Arial, sans-serif;
}

.coords {
  padding: 0 7px 0 5px;
}

.coords::before {
  display: none;
}

.coord {
  display: flex;
  align-items: center;
  gap: 5px;
  margin-right: 12px;
}

.coord:nth-of-type(3) {
  margin-right: 6px;
}

.axis-btn {
  width: 22px;
  height: 22px;
  color: #848078;
  font-size: 12px;
  border: 1px solid;
  border-color: #fff #606060 #606060 #fff;
  box-shadow: inset -1px -1px #a09c94;
}

.combo {
  display: flex;
  align-items: stretch;
  width: 72px;
  height: 20px;
  padding: 1px;
  background: #fff;
  border: 1px solid;
  border-color: #606060 #fff #fff #606060;
}

.combo input,
.combo select {
  flex: 1;
  min-width: 0;
  padding-left: 1px;
  appearance: none;
}

.combo-btn {
  display: flex;
  flex: none;
  align-items: center;
  justify-content: center;
  width: 15px;
  background: #d4d0c8;
  border: 1px solid;
  border-color: #fff #505050 #505050 #fff;
}

.combo-btn svg {
  width: 7px;
  height: 4px;
}

.combo.disabled {
  background: #d4d0c8;
  color: #848078;
  font-size: 12px;
}

.combo.disabled svg {
  fill: #808080;
}

.coords .help {
  margin-left: 6px;
}

.selection .tool {
  width: 24px;
}

.push-btn {
  width: 48px;
  height: 24px;
  margin-right: 7px;
  border: 1px solid;
  border-color: #fff #505050 #505050 #fff;
  box-shadow: inset -1px -1px #909090;
}

.in-combo {
  margin: 0 9px 0 1px;
}

.space {
  width: 7px;
}

.ribbon {
  height: 31px;
  padding: 9px 0 0 187px;
  box-shadow: inset 0 1px #fff;
  font-family: "Liberation Sans", Arial, sans-serif;
}

/* Workspace */
.workspace {
  display: flex;
  flex: 1;
  min-height: 0;
}

.manager {
  position: relative;
  display: flex;
  flex-direction: column;
  flex: none;
  width: 284px;
  margin-right: 3px;
  padding: 2px 8px 7px 6px;
  border: 1px solid;
  border-color: #404040 #606060 #606060 #404040;
  font-family: "Liberation Sans", Arial, sans-serif;
}

.tabs {
  display: flex;
  align-items: flex-end;
  height: 21px;
  border-bottom: 1px solid #fff;
}

.tab {
  height: 18px;
  padding: 0 4px 0 4px;
  border-right: 2px solid #505050;
  border-top: 1px solid #fff;
  text-align: left;
}

.tab.active {
  height: 20px;
  padding: 0 6px 3px 3px;
}

.tab:last-child {
  padding-right: 20px;
}

.manager-tools {
  display: flex;
  align-items: center;
  height: 30px;
  padding: 0 4px;
  border-top: 1px solid #808080;
  box-shadow: inset 0 1px #fff;
}

.raised {
  border: 1px solid;
  border-color: #fff #808080 #808080 #fff;
}

.g1 {
  color: #285088;
  font-family: "Liberation Serif", serif;
  font-size: 14px;
  font-weight: 700;
}

.tree {
  flex: 1;
  margin-top: 1px;
  background: #fff;
  border: 1px solid;
  border-color: #606060 #fff #fff #606060;
  box-shadow: inset 1px 1px #808080;
}

.tooltip {
  position: absolute;
  left: 178px;
  top: 61px;
  z-index: 2;
  padding: 1px 0 1px 1px;
  background: #ffffe1;
  border: 1px solid #000;
  font-family: "DejaVu Sans Condensed", sans-serif;
  white-space: nowrap;
}

.annotation {
  position: absolute;
  left: 152px;
  top: 13px;
  z-index: 3;
  width: 80px;
  height: 130px;
  fill: none;
  stroke: #e80c10;
  stroke-linecap: round;
  stroke-linejoin: round;
  pointer-events: none;
}

.viewport {
  position: relative;
  flex: 1;
  min-width: 0;
  border: 1px solid;
  border-color: #101020 #fff #fff #101020;
  background: linear-gradient(to bottom, #20204f, #1a4370 40%, #145686 72%, #0e6797);
}

.model {
  width: 100%;
  height: 100%;
}

.gnomon {
  position: absolute;
  left: 32px;
  bottom: 21px;
  width: 40px;
  height: 52px;
  fill: none;
  font-family: "Liberation Sans", Arial, sans-serif;
  font-size: 11px;
  font-weight: 700;
}

.view-labels {
  position: absolute;
  left: 6px;
  bottom: 7px;
  display: flex;
  gap: 6px;
  color: #c0c8d0;
  font-family: "Liberation Sans", Arial, sans-serif;
  font-size: 12px;
  font-weight: 700;
}

.scale {
  position: absolute;
  right: 23px;
  bottom: 8px;
  display: flex;
  flex-direction: column;
  align-items: center;
  width: 97px;
  font-family: "Liberation Sans", Arial, sans-serif;
  font-size: 12px;
  font-weight: 700;
}

.scale-value {
  margin-right: 11px;
  color: #10f040;
}

.scale-line {
  width: 100%;
  height: 24px;
  margin: -6px 0 -10px;
  border: solid #f0f800;
  border-width: 0 1px;
  background: linear-gradient(#f0f800, #f0f800) center / 100% 1px no-repeat;
}

.scale-unit {
  margin-right: 14px;
  color: #b8c4cc;
}

.side-tools {
  display: flex;
  flex-direction: column;
  align-items: center;
  align-self: flex-start;
  flex: none;
  width: 30px;
  padding: 10px 0 3px;
  border-bottom: 1px solid #808080;
  box-shadow: 0 1px #fff;
}

.side-tools::before {
  content: "";
  width: 24px;
  height: 3px;
  margin-top: -6px;
  margin-bottom: 4px;
  border: 1px solid;
  border-color: #fff #808080 #808080 #fff;
}

.side-tools .tool {
  height: 22px;
}

/* Status bar */
.statusbar {
  display: flex;
  justify-content: flex-end;
  align-items: stretch;
  gap: 2px;
  height: 24px;
  padding: 3px 0 1px;
}

.cell {
  display: flex;
  align-items: center;
  justify-content: center;
  flex: none;
  border: 1px solid;
  border-color: #808080 #fff #fff #808080;
}

.dim {
  width: 25px;
}

.gview {
  width: 48px;
}

.planes {
  width: 37px;
}

.wcs {
  width: 42px;
}

.groups {
  width: 52px;
}

.attributes {
  width: 60px;
}

.tiny {
  width: 14px;
}

.field {
  gap: 3px;
  padding-left: 5px;
}

.zcombo {
  width: 78px;
}

.zcombo .selected {
  flex: none;
  width: 18px;
  height: 14px;
  margin-top: 1px;
  background: #0a246a;
  color: #fff;
}

.combo-fill {
  flex: 1;
}

.level-combo {
  width: 88px;
}

.color {
  width: 32px;
  height: 100%;
  background: #00ff00;
  color: #205020;
}

.color-drop {
  display: flex;
  align-items: center;
  justify-content: center;
  width: 16px;
}

.color-drop svg {
  width: 9px;
  height: 5px;
}

.style-combo {
  flex: none;
  width: 65px;
  border-width: 2px 1px 1px 2px;
}

.style-combo.point {
  width: 35px;
}

.style-value {
  display: flex;
  flex: 1;
  align-items: center;
  justify-content: center;
}

.style-value svg {
  width: 10px;
  height: 10px;
  stroke: #000;
}

.stroke {
  flex: 1;
  margin: 0 1px;
  border-top: 1px solid #000;
}

.thick .stroke {
  border-top-width: 3px;
}

/* Taskbar */
.taskbar {
  display: flex;
  align-items: center;
  gap: 3px;
  height: 27px;
  padding: 1px 2px 2px;
  border-top: 1px solid #fff;
}

.start,
.task {
  display: flex;
  align-items: center;
  height: 22px;
  border: 1px solid;
  border-color: #fff #404040 #404040 #fff;
  box-shadow: inset -1px -1px #808080;
}

.start {
  flex: none;
  gap: 1px;
  width: 47px;
  padding-left: 2px;
  font-family: "Noto Sans CJK SC", sans-serif;
  font-size: 12px;
}

.start svg,
.quick svg,
.task svg,
.tray svg {
  width: 17px;
  height: 17px;
}

.quick {
  display: flex;
  flex: none;
  align-items: center;
  gap: 6px;
  width: 88px;
  padding-left: 4px;
}

.chevrons {
  margin: -6px 0 0 4px;
  font-size: 14px;
  font-weight: 700;
}

.task {
  flex: 0 1 161px;
  min-width: 0;
  gap: 2px;
  padding: 0 0 0 2px;
  white-space: pre;
}

.task.active {
  background: #ecebe6;
  border-color: #404040 #fff #fff #404040;
  box-shadow: inset 1px 1px #808080;
}

.tray {
  display: flex;
  flex: none;
  align-items: center;
  gap: 1px;
  height: 22px;
  margin-left: auto;
  padding: 0 9px 0 3px;
  border: 1px solid;
  border-color: #808080 #fff #fff #808080;
}

.tray .chevrons {
  margin: -2px 5px 0 0;
}

.tray time {
  margin-left: 8px;
}
</style>
